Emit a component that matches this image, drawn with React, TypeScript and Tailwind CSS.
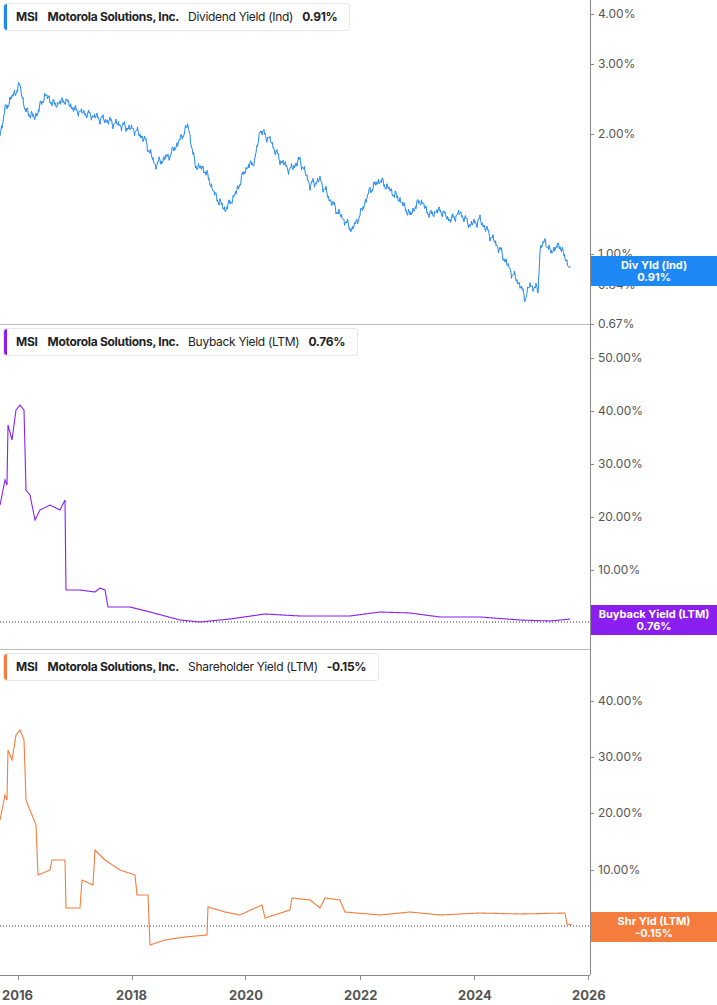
import React from "react";

type P = [number, number];
function jitter(pts: P[], amp: number, step: boolean): string {
  const out: string[] = [];
  for (let i = 0; i < pts.length - 1; i++) {
    const [x0, y0] = pts[i];
    const [x1, y1] = pts[i + 1];
    const n = Math.max(1, Math.round((x1 - x0) * 2));
    for (let k = 0; k < n; k++) {
      const t = k / n;
      const x = x0 + (x1 - x0) * t;
      const j = step ? 0 : amp * (Math.sin(x * 7.3) * 0.5 + Math.sin(x * 2.9 + 1) * 0.6 + Math.sin(x * 23.7) * 0.7 + Math.sin(x * 0.9) * 0.8);
      out.push(`${x.toFixed(1)},${(y0 + (y1 - y0) * t + j).toFixed(1)}`);
    }
  }
  const l = pts[pts.length - 1];
  out.push(`${l[0]},${l[1]}`);
  return out.join(" ");
}

const div: P[] = [[0,135],[5,110],[10,100],[20,85],[25,110],[35,118],[45,95],[55,105],[65,100],[75,110],[90,115],[105,120],[120,125],[135,130],[145,140],[155,165],[170,155],[180,140],[188,125],[195,165],[205,170],[215,195],[225,210],[235,195],[245,170],[255,160],[260,130],[270,140],[280,160],[290,170],[300,160],[310,185],[320,180],[330,200],[340,215],[352,230],[360,215],[370,190],[380,180],[390,190],[400,200],[410,215],[420,200],[430,215],[440,210],[450,220],[460,213],[470,225],[480,220],[490,235],[500,250],[510,270],[520,285],[525,298],[530,285],[538,290],[540,250],[545,240],[550,252],[560,245],[565,258],[570,268]];
const buy: P[] = [[0,505],[5,480],[7,485],[8,425],[12,440],[16,410],[20,405],[24,410],[26,490],[30,495],[35,520],[40,510],[50,505],[60,510],[65,500],[66,590],[80,590],[95,592],[100,588],[105,590],[108,607],[130,607],[150,612],[180,620],[200,622],[230,619],[265,614],[300,616],[350,616],[380,612],[410,613],[440,617],[480,617],[520,620],[550,621],[570,619]];
const shr: P[] = [[0,820],[5,795],[7,800],[8,750],[12,760],[16,735],[20,730],[24,740],[26,800],[36,825],[38,875],[50,870],[52,860],[65,860],[66,908],[80,908],[82,880],[93,885],[95,850],[105,860],[120,870],[135,875],[137,895],[148,895],[150,945],[165,940],[185,937],[207,935],[208,907],[225,912],[240,915],[255,908],[262,905],[265,918],[290,910],[292,898],[310,900],[320,908],[325,898],[340,900],[345,912],[380,915],[410,912],[440,915],[480,913],[520,914],[565,913],[567,924],[572,925]];

function Label({ color, title, value }: { color: string; title: string; value: string }) {
  return (
    <div className="absolute left-[3px] top-[3px] flex items-center h-[28px] bg-white border border-[#e5e7eb] rounded-[3px] text-[12px] tracking-[-0.3px] text-[#222] pr-3">
      <div className="w-[3px] self-stretch rounded-l-[3px]" style={{ background: color }} />
      <span className="font-bold ml-[9px]">MSI</span>
      <span className="font-bold ml-[10px]">Motorola Solutions, Inc.</span>
      <span className="ml-[9px]">{title}</span>
      <span className="font-bold ml-[9px]">{value}</span>
    </div>
  );
}

function Axis({ ticks, tagTop, tagColor, tagName, tagVal }: { ticks: [number, string][]; tagTop: number; tagColor: string; tagName: string; tagVal: string }) {
  return (
    <div className="relative h-[325px] w-[127px] border-l border-[#888]">
      {ticks.map(([y, t]) => (
        <div key={t} className="absolute left-0 flex items-center text-[12px] text-[#555]" style={{ top: y - 8 }}>
          <div className="w-[3px] h-px bg-[#888]" />
          <span className="ml-[4px]">{t}</span>
        </div>
      ))}
      <div className="absolute left-0 right-0 h-[30px] flex flex-col items-center justify-center text-white text-[11px] font-bold leading-[12px]" style={{ top: tagTop, background: tagColor }}>
        <div>{tagName}</div>
        <div>{tagVal}</div>
      </div>
    </div>
  );
}

export default function App() {
  return (
    <div className="w-[717px] h-[1005px] bg-white relative overflow-hidden" style={{ fontFamily: "Inter, 'Noto Sans', sans-serif" }}>
      <div className="flex">
        <div className="w-[590px] flex flex-col">
          <div className="relative h-[325px] border-b border-[#bbb]"><Label color="#1e88f5" title="Dividend Yield (Ind)" value="0.91%" /></div>
          <div className="relative h-[325px] border-b border-[#bbb]"><Label color="#8b1ff0" title="Buyback Yield (LTM)" value="0.76%" /></div>
          <div className="relative h-[325px]"><Label color="#f47c3c" title="Shareholder Yield (LTM)" value="-0.15%" /></div>
        </div>
        <div className="flex flex-col">
          <Axis ticks={[[13, "4.00%"], [63, "3.00%"], [133, "2.00%"], [253, "1.00%"], [284, "0.84%"], [323, "0.67%"]]} tagTop={256} tagColor="#1e88f5" tagName="Div Yld (Ind)" tagVal="0.91%" />
          <Axis ticks={[[32, "50.00%"], [85, "40.00%"], [138, "30.00%"], [191, "20.00%"], [244, "10.00%"], [297, "0.00%"]]} tagTop={280} tagColor="#8b1ff0" tagName="Buyback Yield (LTM)" tagVal="0.76%" />
          <Axis ticks={[[50, "40.00%"], [106, "30.00%"], [162, "20.00%"], [219, "10.00%"], [276, "0.00%"]]} tagTop={262} tagColor="#f47c3c" tagName="Shr Yld (LTM)" tagVal="-0.15%" />
        </div>
      </div>
      <div className="relative h-[30px] w-[590px] border-t border-[#888] text-[13px] font-bold text-[#555]">
        {[["2016", 18], ["2018", 132], ["2020", 245], ["2022", 360], ["2024", 474], ["2026", 588]].map(([t, x]) => (
          <div key={t as string} className="absolute top-0" style={{ left: (x as number) - 16 }}>
            <div className="w-px h-[4px] bg-[#888] ml-[16px]" />
            <div className="mt-[6px]">{t}</div>
          </div>
        ))}
      </div>
      <svg className="absolute left-0 top-0 pointer-events-none" width="590" height="975">
        <line x1="0" y1="622" x2="590" y2="622" stroke="#333" strokeDasharray="1 2" />
        <line x1="0" y1="926" x2="590" y2="926" stroke="#333" strokeDasharray="1 2" />
        <polyline points={jitter(div, 2.5, false)} fill="none" stroke="#1e88f5" strokeWidth="1" />
        <polyline points={jitter(buy, 0, true)} fill="none" stroke="#8b1ff0" strokeWidth="1.1" />
        <polyline points={jitter(shr, 0, true)} fill="none" stroke="#f47c3c" strokeWidth="1.1" />
      </svg>
    </div>
  );
}
